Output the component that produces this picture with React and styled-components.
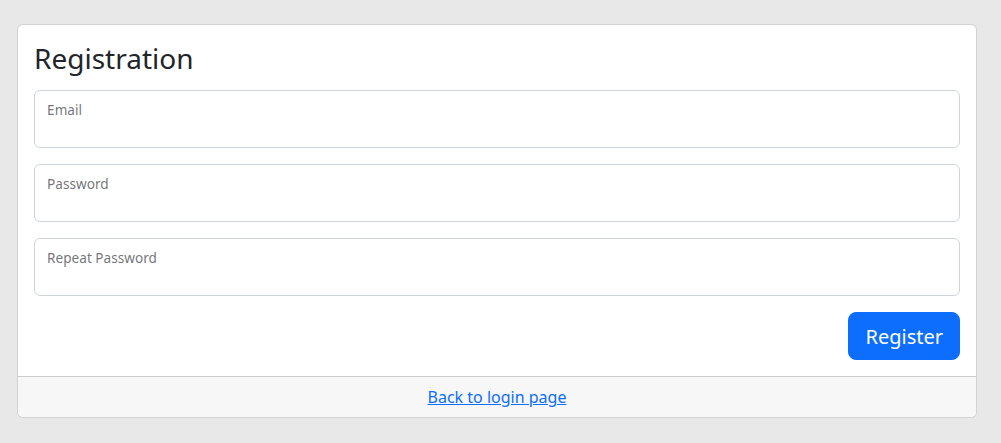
import React from "react";
import styled, { createGlobalStyle } from "styled-components";

const GlobalStyle = createGlobalStyle`
  *, *::before, *::after {
    box-sizing: border-box;
  }
  body {
    margin: 0;
    background: #e8e8e8;
    font-family: "Noto Sans", "DejaVu Sans", sans-serif;
    font-size: 16px;
    line-height: 1.5;
    color: #212529;
  }
`;

const Page = styled.div`
  padding: 24px 24px 0 17px;
`;

const Card = styled.div`
  display: flex;
  flex-direction: column;
  background: #fff;
  border: 1px solid rgba(0, 0, 0, 0.175);
  border-radius: 6px;
  overflow: hidden;
`;

const CardBody = styled.div`
  padding: 16px;
`;

const Title = styled.h3`
  margin: 0 0 15px;
  font-size: 28px;
  font-weight: 400;
  line-height: 34px;
`;

const Form = styled.form`
  display: flex;
  flex-direction: column;
  gap: 16px;
`;

const Field = styled.div`
  position: relative;
`;

const Input = styled.input`
  display: block;
  width: 100%;
  height: 58px;
  padding: 26px 12px 10px;
  font: inherit;
  color: #212529;
  background: #fff;
  border: 1px solid #ced4da;
  border-radius: 6px;
  outline: none;
`;

const Label = styled.label`
  position: absolute;
  top: 2px;
  left: 0;
  padding: 16px 12px;
  border: 1px solid transparent;
  color: rgba(33, 37, 41, 0.65);
  transform-origin: 0 0;
  transform: scale(0.85) translateY(-0.5rem) translateX(0.15rem);
  pointer-events: none;
  white-space: nowrap;
`;

const Actions = styled.div`
  display: flex;
  justify-content: flex-end;
`;

const Button = styled.button`
  padding: 9px 16px 7px;
  font-family: inherit;
  font-size: 20px;
  line-height: 1.5;
  color: #fff;
  background: #0d6efd;
  border: 1px solid #0d6efd;
  border-radius: 8px;
  cursor: pointer;
`;

const CardFooter = styled.div`
  padding: 8px 16px;
  text-align: center;
  background: #f7f7f7;
  border-top: 1px solid rgba(0, 0, 0, 0.175);
`;

const Link = styled.a`
  color: #0d6efd;
  text-decoration: underline;
`;

const fields = [
  { id: "email", label: "Email", type: "email" },
  { id: "password", label: "Password", type: "password" },
  { id: "repeat", label: "Repeat Password", type: "password" },
];

const App = () => {
  return (
    <>
      <GlobalStyle />
      <Page>
        <Card>
          <CardBody>
            <Title>Registration</Title>
            <Form onSubmit={e => e.preventDefault()}>
              {fields.map(f => (
                <Field key={f.id}>
                  <Input id={f.id} type={f.type} />
                  <Label htmlFor={f.id}>{f.label}</Label>
                </Field>
              ))}
              <Actions>
                <Button type="submit">Register</Button>
              </Actions>
            </Form>
          </CardBody>
          <CardFooter>
            <Link href="#login">Back to login page</Link>
          </CardFooter>
        </Card>
      </Page>
    </>
  );
};

export default App;
